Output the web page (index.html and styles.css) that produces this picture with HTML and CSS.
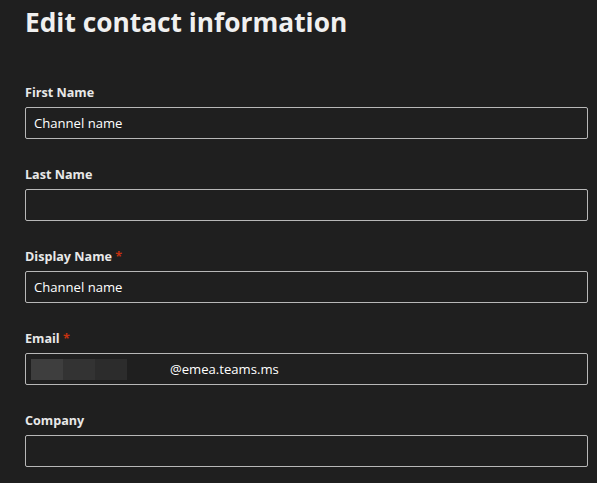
FILE: index.html
```html
<!DOCTYPE html>
<html>
<head>
<meta charset="utf-8">
<link rel="stylesheet" href="styles.css">
</head>
<body>
<div class="page">
  <h1 class="title">Edit contact information</h1>
  <form class="form">
    <div class="field">
      <label class="label">First Name</label>
      <div class="input"><span class="value">Channel name</span></div>
    </div>
    <div class="field">
      <label class="label">Last Name</label>
      <div class="input"></div>
    </div>
    <div class="field">
      <label class="label">Display Name <span class="req">*</span></label>
      <div class="input"><span class="value">Channel name</span></div>
    </div>
    <div class="field">
      <label class="label">Email <span class="req">*</span></label>
      <div class="input">
        <span class="blur"><span class="b1"></span><span class="b2"></span><span class="b3"></span></span>
        <span class="value email">@emea.teams.ms</span>
      </div>
    </div>
    <div class="field">
      <label class="label">Company</label>
      <div class="input"></div>
    </div>
  </form>
</div>
</body>
</html>
```
FILE: styles.css
```css
html, body {
  margin: 0;
  padding: 0;
  background: #1f1f1f;
  height: 100%;
  overflow: hidden;
}
.page {
  padding: 0 9px 0 25px;
  font-family: "Open Sans", "Noto Sans", sans-serif;
  color: #e6e6e6;
}
.title {
  margin: 0;
  padding-top: 2px;
  font-size: 26.3px;
  line-height: 40px;
  font-weight: 700;
  color: #f0f0f0;
  letter-spacing: 0;
}
.form {
  display: flex;
  flex-direction: column;
  gap: 27px;
  margin-top: 42px;
}
.field {
  display: flex;
  flex-direction: column;
  gap: 5px;
}
.label {
  font-size: 12.6px;
  line-height: 18px;
  font-weight: 700;
  color: #e8e8e8;
}
.req {
  color: #c4310f;
}
.input {
  box-sizing: border-box;
  height: 32px;
  border: 1px solid #b8b8b8;
  border-radius: 2px;
  display: flex;
  align-items: center;
  padding: 0 8px;
}
.value {
  font-size: 13.1px;
  color: #ffffff;
}
.blur {
  display: flex;
  height: 21px;
  margin-left: -3px;
}
.blur span {
  width: 32px;
  height: 21px;
}
.b1 { background: #3e3e3e; }
.b2 { background: #333333; }
.b3 { background: #2c2c2c; }
.email {
  margin-left: 43px;
}
```
